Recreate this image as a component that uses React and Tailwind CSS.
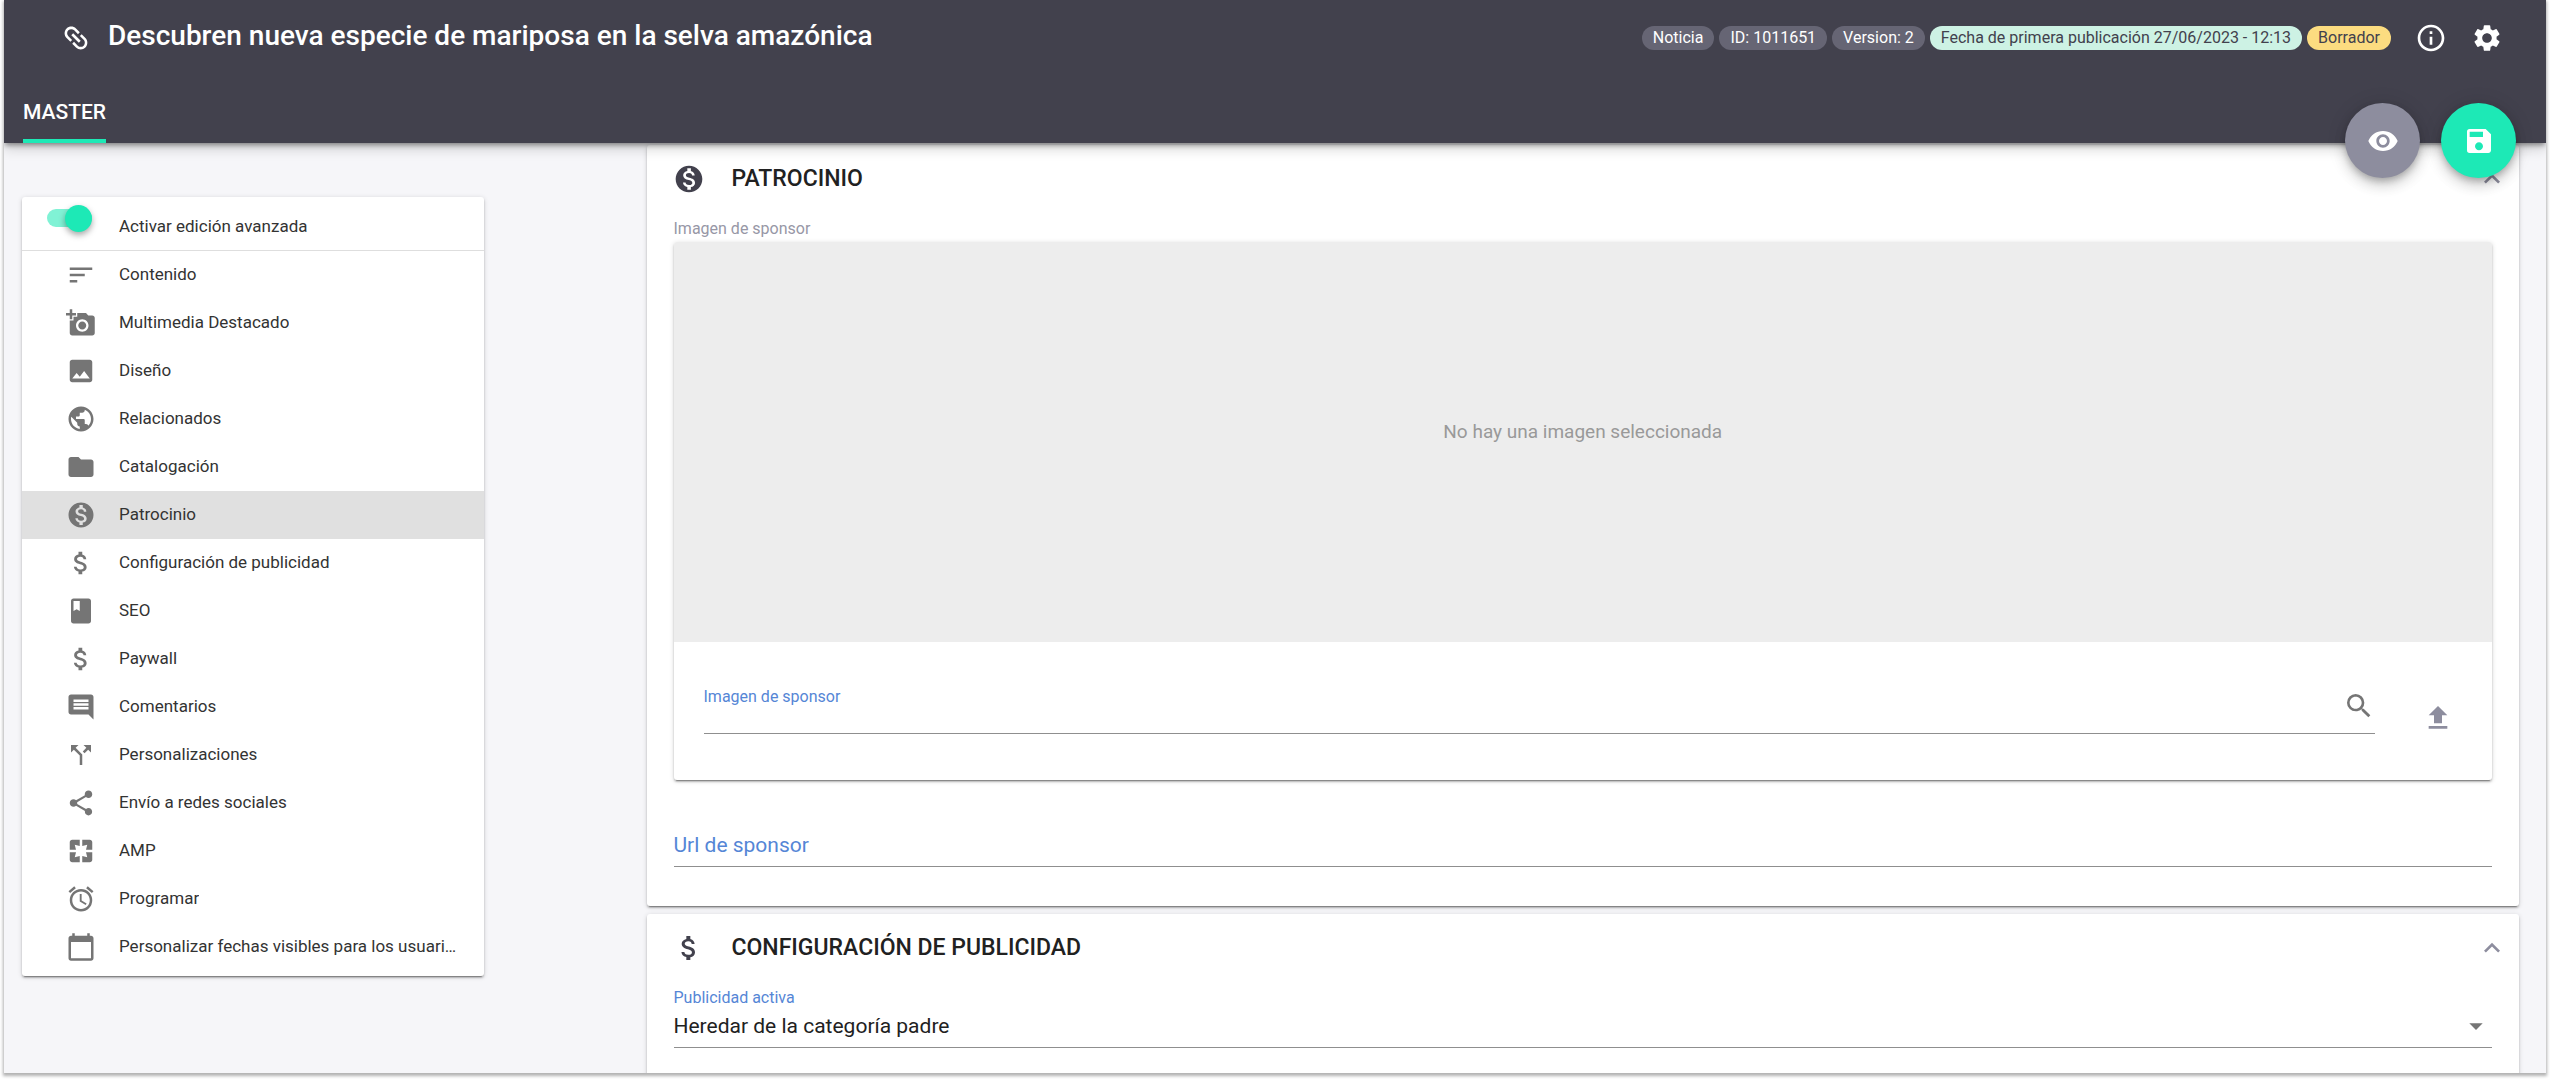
import { useState } from "react";
import {
  MdAccessAlarm,
  MdAddAPhoto,
  MdArrowDropDown,
  MdAttachMoney,
  MdBook,
  MdCalendarToday,
  MdCallSplit,
  MdComment,
  MdExpandLess,
  MdFileUpload,
  MdFolder,
  MdImage,
  MdInfoOutline,
  MdLink,
  MdMonetizationOn,
  MdPages,
  MdPublic,
  MdSave,
  MdSearch,
  MdSettings,
  MdShare,
  MdSort,
  MdVisibility,
} from "react-icons/md";

const CARD_SHADOW =
  "shadow-[0_3px_1px_-2px_rgba(0,0,0,0.3),0_2px_2px_0_rgba(0,0,0,0.2),0_1px_5px_0_rgba(0,0,0,0.16)]";
const FAB_SHADOW =
  "shadow-[0_4px_6px_-1px_rgba(0,0,0,0.2),0_8px_13px_0_rgba(0,0,0,0.14),0_1px_20px_0_rgba(0,0,0,0.12)]";

const MENU_ITEMS = [
  { label: "Contenido", icon: MdSort },
  { label: "Multimedia Destacado", icon: MdAddAPhoto },
  { label: "Diseño", icon: MdImage },
  { label: "Relacionados", icon: MdPublic },
  { label: "Catalogación", icon: MdFolder },
  { label: "Patrocinio", icon: MdMonetizationOn },
  { label: "Configuración de publicidad", icon: MdAttachMoney },
  { label: "SEO", icon: MdBook },
  { label: "Paywall", icon: MdAttachMoney },
  { label: "Comentarios", icon: MdComment },
  { label: "Personalizaciones", icon: MdCallSplit },
  { label: "Envío a redes sociales", icon: MdShare },
  { label: "AMP", icon: MdPages },
  { label: "Programar", icon: MdAccessAlarm },
  { label: "Personalizar fechas visibles para los usuarios", icon: MdCalendarToday },
];

const BADGES = [
  { label: "Noticia", tone: "bg-[#666574] text-white" },
  { label: "ID: 1011651", tone: "bg-[#666574] text-white" },
  { label: "Version: 2", tone: "bg-[#666574] text-white" },
  { label: "Fecha de primera publicación 27/06/2023 - 12:13", tone: "bg-[#cdf2e4] text-[#42414d]" },
  { label: "Borrador", tone: "bg-[#fcdc80] text-[#42414d]" },
];

function Header() {
  return (
    <header className="relative z-10 bg-[#42414d] text-white shadow-[0_3px_5px_-1px_rgba(0,0,0,0.4),0_6px_12px_0_rgba(0,0,0,0.16)]">
      <div className="flex h-[75px] items-center justify-between pr-[43px] pl-14">
        <div className="flex items-center gap-4">
          <MdLink className="size-8 rotate-45" />
          <h1 className="pb-1 text-[28px] leading-8 font-medium">
            Descubren nueva especie de mariposa en la selva amazónica
          </h1>
        </div>
        <div className="flex items-center">
          <ul className="flex gap-[5px]">
            {BADGES.map(({ label, tone }) => (
              <li key={label} className={`h-6 rounded-full px-[11px] text-[16px] leading-6 ${tone}`}>
                {label}
              </li>
            ))}
          </ul>
          <button type="button" aria-label="Información" className="ml-6">
            <MdInfoOutline className="size-8" />
          </button>
          <button type="button" aria-label="Ajustes" className="ml-6">
            <MdSettings className="size-8" />
          </button>
        </div>
      </div>
      <nav className="flex h-[68px] px-[19px]">
        <a href="#master" className="border-b-4 border-[#1de9b6] pt-[21px] text-[21px] leading-8 font-medium">
          MASTER
        </a>
      </nav>
      <div className="absolute right-[30px] -bottom-[35px] flex gap-[21px]">
        <button
          type="button"
          aria-label="Previsualizar"
          className={`flex size-[75px] items-center justify-center rounded-full bg-[#8d8d9e] ${FAB_SHADOW}`}
        >
          <MdVisibility className="size-8" />
        </button>
        <button
          type="button"
          aria-label="Guardar"
          className={`flex size-[75px] items-center justify-center rounded-full bg-[#1de9b6] ${FAB_SHADOW}`}
        >
          <MdSave className="size-8" />
        </button>
      </div>
    </header>
  );
}

function Sidebar({ active, setActive }) {
  const [advanced, setAdvanced] = useState(true);

  return (
    <aside className={`w-[462px] rounded-[3px] bg-white pb-[5px] text-[17px] ${CARD_SHADOW}`}>
      <label className="flex h-[54px] border-b border-[#dedede] pt-2 pl-[25px]" htmlFor="advanced">
        <input
          id="advanced"
          type="checkbox"
          role="switch"
          className="peer sr-only"
          checked={advanced}
          onChange={(event) => setAdvanced(event.target.checked)}
        />
        <span className="mt-1 flex h-[18px] w-[45px] items-center rounded-full bg-gray-300 peer-checked:justify-end peer-checked:bg-[#80f2d5]">
          <span className="size-[27px] shrink-0 rounded-full bg-[#1de9b6] shadow-[0_3px_6px_rgba(0,0,0,0.35)]" />
        </span>
        <span className="ml-[27px] pt-[9px] leading-6 text-[#333333]">Activar edición avanzada</span>
      </label>
      <ul>
        {MENU_ITEMS.map(({ label, icon: Icon }) => (
          <li key={label}>
            <button
              type="button"
              className={`flex h-12 w-full items-center gap-[23px] pr-[22px] pl-11 text-left ${
                label === active ? "bg-[#e0e0e0]" : ""
              }`}
              onClick={() => setActive(label)}
            >
              <Icon className="size-[30px] shrink-0 text-[#757575]" />
              <span className="truncate text-[#333333]">{label}</span>
            </button>
          </li>
        ))}
      </ul>
    </aside>
  );
}

function Section({ icon: Icon, title, children }) {
  return (
    <section className={`rounded-[3px] bg-white px-[27px] pt-[18px] ${CARD_SHADOW}`}>
      <div className="flex items-center">
        <Icon className="-ml-px size-8 text-[#42414d]" />
        <h2 className="ml-[27px] text-[23px] leading-8 font-medium text-[#212121]">{title}</h2>
        <button type="button" aria-label={`Contraer ${title}`} className="-mr-4 ml-auto text-[#8d8d9e]">
          <MdExpandLess className="size-8" />
        </button>
      </div>
      {children}
    </section>
  );
}

export default function App() {
  const [active, setActive] = useState("Patrocinio");
  const [sponsorUrl, setSponsorUrl] = useState("");

  return (
    <div className="h-screen bg-white px-1 pb-2 font-[Roboto,sans-serif]">
      <div className="flex h-full flex-col overflow-hidden bg-[#f6f6f9] shadow-[0_2px_3px_1px_rgba(0,0,0,0.3)]">
        <Header />
        <div className="flex min-h-0 flex-1 items-start">
          <div className="w-1/4 shrink-0 pt-[54px] pl-[18px]">
            <Sidebar active={active} setActive={setActive} />
          </div>
          <main className="flex min-w-0 flex-1 flex-col gap-2 pt-0.5 pr-[27px] pl-[7px]">
            <Section icon={MdMonetizationOn} title="PATROCINIO">
              <p className="mt-[22px] text-[16px] leading-6 text-[#9797a6]">Imagen de sponsor</p>
              <div className={`mt-px rounded-[3px] bg-white ${CARD_SHADOW}`}>
                <div className="flex h-[400px] items-center justify-center rounded-t-[3px] bg-[#ededed] pb-5 text-[19px] text-[#999999]">
                  No hay una imagen seleccionada
                </div>
                <div className="flex items-end pt-[43px] pr-[38px] pb-[46px] pl-[30px]">
                  <div className="flex flex-1 items-center border-b border-[#8f8f8f]">
                    <div className="flex-1">
                      <label className="block text-[16px] leading-6 text-[#5586d6]" htmlFor="sponsor-image">
                        Imagen de sponsor
                      </label>
                      <input id="sponsor-image" className="block h-6 w-full text-[21px] outline-none" />
                    </div>
                    <button type="button" aria-label="Buscar imagen" className="pb-1.5 text-[#757575]">
                      <MdSearch className="size-8" />
                    </button>
                  </div>
                  <button type="button" aria-label="Subir imagen" className="ml-[47px] text-[#8d8d9e]">
                    <MdFileUpload className="size-8" />
                  </button>
                </div>
              </div>
              <div className="pt-[45px] pb-[39px]">
                <div className="relative">
                  <input
                    id="sponsor-url"
                    className="block h-[42px] w-full border-b border-[#8f8f8f] pb-1 text-[21px] outline-none"
                    value={sponsorUrl}
                    onChange={(event) => setSponsorUrl(event.target.value)}
                  />
                  {/* the label rests on the empty field and floats above it once there is a value */}
                  <label
                    className={`pointer-events-none absolute left-0 text-[#5586d6] ${
                      sponsorUrl ? "-top-5 text-[16px] leading-6" : "top-1 text-[21px] leading-8"
                    }`}
                    htmlFor="sponsor-url"
                  >
                    Url de sponsor
                  </label>
                </div>
              </div>
            </Section>
            <Section icon={MdAttachMoney} title="CONFIGURACIÓN DE PUBLICIDAD">
              <label className="mt-[22px] block text-[16px] leading-6 text-[#5586d6]" htmlFor="ads">
                Publicidad activa
              </label>
              <div className="relative mb-8">
                <select
                  id="ads"
                  className="block h-[38px] w-full appearance-none border-b border-[#8f8f8f] pb-1 text-[21px] text-[#212121] outline-none"
                >
                  <option>Heredar de la categoría padre</option>
                </select>
                <MdArrowDropDown className="pointer-events-none absolute top-0 right-0 size-8 text-[#757575]" />
              </div>
            </Section>
          </main>
        </div>
      </div>
    </div>
  );
}
